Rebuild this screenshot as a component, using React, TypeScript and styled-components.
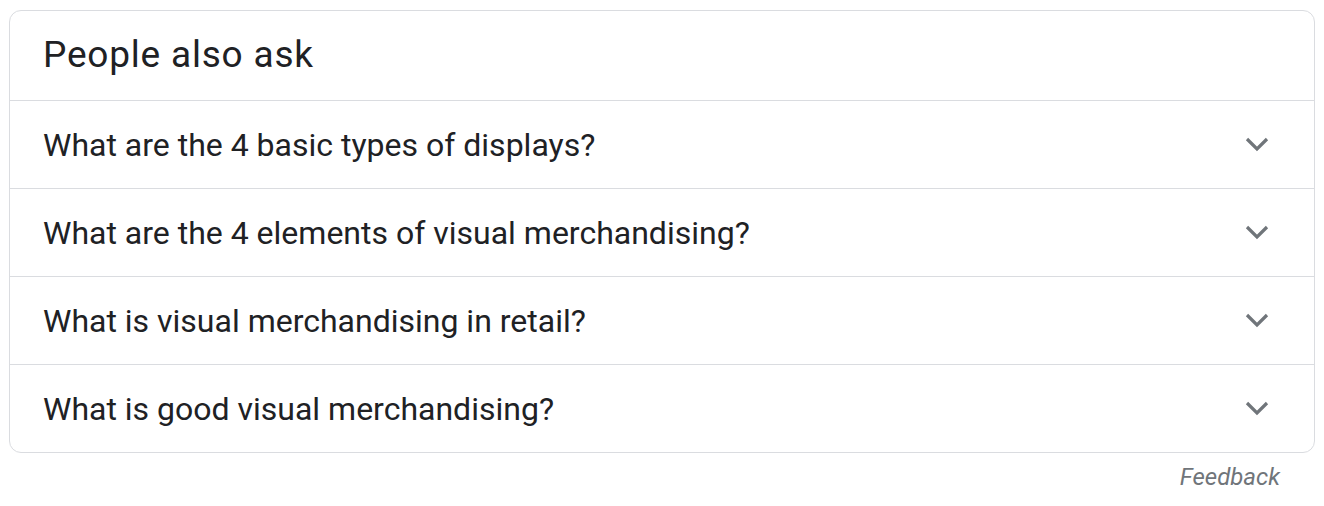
import React from 'react'
import styled, {createGlobalStyle} from 'styled-components'

const Global = createGlobalStyle`
  body {
    margin: 0;
    background: #fff;
    font-family: Roboto, "Liberation Sans", Arial, sans-serif;
    color: #202124;
  }
`
const Wrap = styled.div`
  padding: 10px 9px 0 9px;
  width: 1306px;
`
const Card = styled.div`
  border: 1px solid #dadce0;
  border-radius: 12px;
  overflow: hidden;
`
const Header = styled.div`
  height: 89px;
  display: flex;
  align-items: center;
  padding-left: 33px;
  font-size: 37px;
  letter-spacing: 0.8px;
  color: #202124;
  padding-bottom: 2px;
  box-sizing: border-box;
`
const Row = styled.div`
  height: 88px;
  border-top: 1px solid #dadce0;
  display: flex;
  align-items: center;
  justify-content: space-between;
  padding: 0 45px 0 33px;
  box-sizing: border-box;
  font-size: 32px;
  cursor: pointer;
`
const Chevron = styled.svg`
  width: 24px;
  height: 15px;
`
const Feedback = styled.div`
  text-align: right;
  padding: 10px 35px 0 0;
  font-size: 24px;
  font-style: italic;
  color: #70757a;
`
const questions = [
    'What are the 4 basic types of displays?',
    'What are the 4 elements of visual merchandising?',
    'What is visual merchandising in retail?',
    'What is good visual merchandising?',
]

export default function App() {
    return (
        <Wrap>
            <Global/>
            <Card>
                <Header>People also ask</Header>
                {questions.map(q => (
                    <Row key={q}>
                        <span>{q}</span>
                        <Chevron viewBox="0 0 24 15">
                            <path d="M2 2 L12 12 L22 2" fill="none" stroke="#70757a" strokeWidth="3.2"/>
                        </Chevron>
                    </Row>
                ))}
            </Card>
            <Feedback>Feedback</Feedback>
        </Wrap>
    )
}
